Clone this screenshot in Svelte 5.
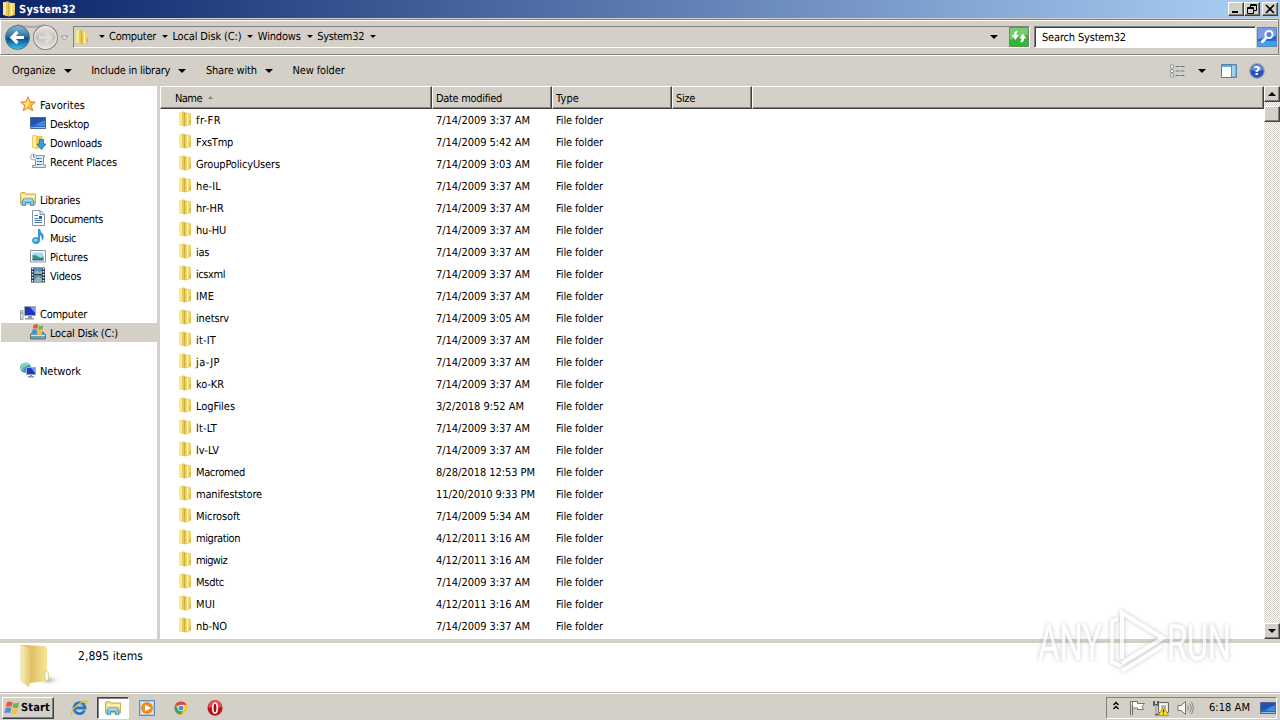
<script>
  const tree = [
    { t: 'Favorites', i: 'star', w: 45 },
    { t: 'Desktop', i: 'desktop', sub: true, w: 39 },
    { t: 'Downloads', i: 'downloads', sub: true, w: 52 },
    { t: 'Recent Places', i: 'recent', sub: true, w: 67 },
    null,
    { t: 'Libraries', i: 'library', w: 40 },
    { t: 'Documents', i: 'doc', sub: true, w: 53 },
    { t: 'Music', i: 'music', sub: true, w: 26 },
    { t: 'Pictures', i: 'picture', sub: true, w: 38 },
    { t: 'Videos', i: 'video', sub: true, w: 31 },
    null,
    { t: 'Computer', i: 'computer', w: 47 },
    { t: 'Local Disk (C:)', i: 'disk', sub: true, sel: true, w: 68 },
    null,
    { t: 'Network', i: 'network', w: 41 }
  ];
  const A = '7/14/2009 3:37 AM';
  const M = '4/12/2011 3:16 AM';
  const files = [
    ['fr-FR', A, 25], ['FxsTmp', '7/14/2009 5:42 AM', 37], ['GroupPolicyUsers', '7/14/2009 3:03 AM', 84],
    ['he-IL', A, 25], ['hr-HR', A, 28], ['hu-HU', A, 30], ['ias', A, 13], ['icsxml', A, 29], ['IME', A, 18],
    ['inetsrv', '7/14/2009 3:05 AM', 33], ['it-IT', A, 20], ['ja-JP', A, 24], ['ko-KR', A, 28],
    ['LogFiles', '3/2/2018 9:52 AM', 39], ['lt-LT', A, 21], ['lv-LV', A, 23],
    ['Macromed', '8/28/2018 12:53 PM', 49], ['manifeststore', '11/20/2010 9:33 PM', 66],
    ['Microsoft', '7/14/2009 5:34 AM', 44], ['migration', M, 44], ['migwiz', M, 31], ['Msdtc', A, 28],
    ['MUI', M, 19], ['nb-NO', A, 31]
  ];
  const crumbs = [['Computer', 47], ['Local Disk (C:)', 69], ['Windows', 43], ['System32', 47]];
  const dateWidth = (d) => (d.length > 17 ? 99 : d.length < 17 ? 88 : 94);

  function fit(node, width) {
    const run = () => {
      node.style.letterSpacing = '0px';
      const natural = node.getBoundingClientRect().width;
      node.style.letterSpacing = `${(width - natural) / node.textContent.length}px`;
    };
    run();
    document.fonts?.ready.then(run);
  }
</script>

{#snippet label(t, w)}<span class="label" use:fit={w}>{t}</span>{/snippet}

{#snippet arrow(w = 8)}
  <svg class="arrow" width={w} height={w / 2} viewBox="0 0 8 4"><path d="M0 0H8L4 4Z" /></svg>
{/snippet}

{#snippet folder()}
  <svg width="16" height="16" viewBox="0 0 16 16">
    <path d="M2 1.500 7 .3 8.500 1.500 14 2.200V14L8 15.500 2 14Z" fill="#e9cf62" />
    <path d="M2 1.500 6 1V14.500L2 13.500Z" fill="#f8e992" />
    <path d="M5 1.500 7.500 1V14L5 14.500Z" fill="#e9c95a" />
    <path d="M7 1 8.500 2V15L7 14.500Z" fill="#cfae42" />
    <path d="M8.500 2.500 14 2.500V13.500L8.500 15Z" fill="#eed36b" />
    <path d="M10.500 2.500V14" stroke="#fff3ac" stroke-width="1.500" />
    <path d="M13.300 9V13.500" stroke="#c5aa55" />
  </svg>
{/snippet}

{#snippet library()}
  <svg width="16" height="16" viewBox="0 0 16 16">
    <path d="M.5 2.500 1.500 1.500H5L6.500 3H15.500V13H.5Z" fill="#f3dc83" stroke="#d7ac3e" />
    <path d="M6 4.500H15V6H2V4Z" fill="#fff8ce" />
    <path d="M1.500 6.500H15V12H1.500Z" fill="#eedb87" />
    <path d="M2 14.500V10L4 8H12L14 10V14.500H10.500V11.500H5.500V14.500Z" fill="#79c6ea" stroke="#318bb9" stroke-width=".8" />
    <path d="M4 9H12" stroke="#c8f4ff" />
  </svg>
{/snippet}

{#snippet monitor()}
  <svg width="16" height="16" viewBox="0 0 16 16">
    <path d="M.5 2.500H15.500V13.500H.5Z" fill="#2a68c8" stroke="#4a6694" />
    <path d="M1 3H15V6Q7 7 1 11Z" fill="#2450ae" />
    <path d="M6 11Q9 6.500 15 5.500V11Z" fill="#4486dc" />
    <path d="M1 12.500H15" stroke="#8fc3ea" /><path d="M1 12.500H4" stroke="#7fc0a4" />
  </svg>
{/snippet}

{#snippet flag()}
  <g>
    <path d="M2 2Q5 0 8 2L7 7Q4 5.500 1 7Z" fill="#e95830" />
    <path d="M9 2.500Q12 4 15 2L14 7.500Q11 9 8 7.500Z" fill="#72b743" />
    <path d="M.8 8Q4 6.500 6.800 8.300L5.500 13.500Q3 12-.5 13.500Z" fill="#4b8edb" />
    <path d="M7.800 8.700Q11 10 13.800 8.500L12.500 14Q9 15.500 6.500 14Z" fill="#f6c433" />
  </g>
{/snippet}

{#snippet icon(n)}
  {#if n === 'library'}{@render library()}
  {:else if n === 'desktop'}{@render monitor()}
  {:else}
    <svg width="16" height="16" viewBox="0 0 16 16">
      {#if n === 'star'}
        <path d="M8 .8 10.100 5.700 15.400 6.100 11.300 9.500 12.700 14.800 8 11.900 3.300 14.800 4.700 9.500.6 6.100 5.900 5.700Z" fill="#ffbd36" stroke="#e6892b" />
        <path d="M8 3 9.200 7 8 10 4.500 13 6 9 3 7 7 6.500Z" fill="#ffe993" />
      {:else if n === 'downloads'}
        <path d="M2 1.500 6 .5 7 2H12.500V14L6 15 2 13.500Z" fill="#e9c957" /><path d="M3 2 6 1.500V14L3 13Z" fill="#fff0a7" />
        <path d="M9.500 5.500H13.500V10H16L11.500 15.500 7 10H9.500Z" fill="#369dde" stroke="#286aa7" stroke-width=".8" />
      {:else if n === 'recent'}
        <path d="M5.500 2.500H14.500V4H13.500V12H15.500V14.500H2.500V12.500H5.500Z" fill="#dceaf4" stroke="#8195a8" />
        <path d="M7 5.500H12M7 8.500H12M7 11.500H12" stroke="#5794c7" /><path d="M7 5.500H9M10 8.500H12M7 11.500H9" stroke="#334e70" />
        <circle cx="3.500" cy="4" r="3" fill="#f1f5fb" stroke="#9ba9b9" /><path d="M3.500 2V4H5" fill="none" stroke="#687789" />
      {:else if n === 'doc'}
        <path d="M2.500.5H10L14.500 4V15.500H2.500Z" fill="#fafcff" stroke="#8296ae" /><path d="M10 1V4.500H14" fill="#d6e5f2" stroke="#8296ae" />
        <path d="M4.500 5.500H8M4.500 8.500H8M4.500 10.500H12M4.500 12.500H12" stroke="#4879a8" /><path d="M9 6H12V9H9Z" fill="#315f9b" />
      {:else if n === 'music'}
        <path d="M8 0H10Q10.500 3 12.500 4.500 15.500 8 11.500 12.500 12.500 8 10 6V11.500A4 3.500 0 1 1 8 8.500Z" fill="#3699dc" /><ellipse cx="5.500" cy="11" rx="2" ry="1.500" fill="#8ad5f7" />
      {:else if n === 'picture'}
        <path d="M.5 2.500H15.500V14H.5Z" fill="#fff" stroke="#8496a8" /><path d="M2.500 4.500H13.500V12H2.500Z" fill="#9fddf2" /><path d="M2.500 7Q7 7 9 9T13.500 8V12H2.500Z" fill="#438c83" /><path d="M2.500 11H13.500V12.500H2.500Z" fill="#236aa3" />
      {:else if n === 'video'}
        <path d="M1 .5H15V15.500H1Z" fill="#24384c" /><path d="M4 1H12V7H4ZM4 8H12V15H4Z" fill="#548fbb" /><path d="M4 6 7 3 9 5 12 4V7H4ZM4 14 8 9 12 12V15H4Z" fill="#9bb3a0" />
        <path d="M2.500 1V15M13.500 1V15" stroke="#f1f5f7" stroke-width="1.500" stroke-dasharray="1.500 1.500" />
      {:else if n === 'computer'}
        <path d="M.5 5.500H3V14.500H.5Z" fill="#e4e9e8" stroke="#8f9b9b" /><path d="M1 8H3" stroke="#64af4b" />
        <path d="M4.500 1.500H15.500V10.500H4.500Z" fill="#2632b7" stroke="#a0abbf" /><path d="M10 2H15V8Z" fill="#7b96ea" /><path d="M8 11H12V13H14V14.500H5V13H8Z" fill="#8d99ac" />
      {:else if n === 'disk'}
        <path d="M.5 10.500 3 8H13L15.500 10.500V15H.5Z" fill="#6f9cae" stroke="#527581" /><path d="M1 11.500H15" stroke="#cdebf0" /><path d="M12 13.500H14" stroke="#62dd6c" />
        <g transform="translate(2 -.5) scale(.76)">{@render flag()}</g>
      {:else if n === 'network'}
        <circle cx="5.500" cy="5.500" r="5.300" fill="#359bbc" /><path d="M1 3 5 .5 9 2 7 4 3 6 4 9 1 7Z" fill="#83d4a1" /><path d="M2 2Q6-1 9 3" fill="none" stroke="#c8f7ff" />
        <path d="M6.500 5.500H15.500V12.500H6.500Z" fill="#2438bf" stroke="#9badcb" /><path d="M11 6H15V11Z" fill="#6c99e8" /><path d="M10 13H12V14H14V15.500H8V14H10Z" fill="#8692a3" />
      {/if}
    </svg>
  {/if}
{/snippet}

<div class="screen">
  <header class="title">
    <span class="title-icon">{@render folder()}</span><b>{@render label('System32', 57)}</b>
    <div class="winbtns">
      <i><svg width="12" height="10"><path d="M2 8H8" stroke="#000" stroke-width="2" /></svg></i>
      <i><svg width="12" height="10"><path d="M4.500 4V.5H10.500V6.500H8M4 1.500H11M1.500 3.500H7.500V9.500H1.500ZM1 4.500H8" fill="none" stroke="#000" /></svg></i>
      <i class="close"><svg width="12" height="10"><path d="M2 1 10 9M10 1 2 9" stroke="#000" stroke-width="1.600" /></svg></i>
    </div>
  </header>

  <div class="nav">
    <svg class="navbtns" width="72" height="30" viewBox="0 0 72 30">
      <defs>
        <linearGradient id="blue" x2="0" y2="1"><stop offset="0" stop-color="#8fb7cc" /><stop offset=".45" stop-color="#2a76a9" /><stop offset=".55" stop-color="#07508b" /><stop offset="1" stop-color="#38c8f4" /></linearGradient>
        <linearGradient id="grey" x2="0" y2="1"><stop offset="0" stop-color="#e8e6e3" /><stop offset=".5" stop-color="#c4c1bd" /><stop offset="1" stop-color="#e6e4e1" /></linearGradient>
      </defs>
      <path d="M17 3Q31 7 45 3" fill="none" stroke="#aaa9a8" stroke-width="2" />
      <circle cx="17.500" cy="15.500" r="12" fill="url(#blue)" stroke="#536f86" />
      <circle cx="45.500" cy="15.500" r="12" fill="url(#grey)" stroke="#8f8e8c" stroke-width="1.200" /><circle cx="45.500" cy="15.500" r="10.800" fill="none" stroke="#f1efed" />
      <path d="M24 15.500H13M17.500 10 12 15.500 17.500 21" fill="none" stroke="#fff" stroke-width="3.200" />
      <path d="M39 15.500H50M45.500 10 51 15.500 45.500 21" fill="none" stroke="#dedbd8" stroke-width="3" />
      <path d="M61 14H68L64.500 18Z" fill="#eee" stroke="#969490" />
    </svg>
    <div class="address">
      <span class="fold">{@render folder()}</span>
      <span class="first">{@render arrow(6)}</span>
      {#each crumbs as c}<span class="crumb">{@render label(c[0], c[1])}{@render arrow(6)}</span>{/each}
      <span class="drop">{@render arrow(8)}</span>
      <svg class="refresh" width="20" height="20" viewBox="0 0 20 20">
        <path d="M.5.5H19.500V19.500H.5Z" fill="#42aa42" stroke="#668a61" /><path d="M1 1H19V8Q10 9 1 13Z" fill="#77cb71" /><path d="M1 15H19V19H1Z" fill="#28bf26" />
        <path d="M9 4Q5 3.500 5 8H2.500L6.500 13 9.500 8H7.500Q7 6 9 4ZM11 15Q15 16 15 11.500H17.500L13.500 6.500 10.500 11.500H12.500Q13 13 11 15Z" fill="#fff" />
      </svg>
    </div>
    <div class="search">{@render label('Search System32', 84)}</div>
    <svg class="go" width="20" height="20" viewBox="0 0 20 20">
      <path d="M.5.5H19.500V19.500H.5Z" fill="#2865d1" stroke="#6582b3" /><path d="M1 1H19V9L1 12Z" fill="#799be7" /><path d="M1 14H19V19H1Z" fill="#36a4ec" />
      <circle cx="12" cy="7.500" r="3.600" fill="#5482dc" stroke="#fff" stroke-width="2" /><path d="M9 11 4.500 15.500" stroke="#fff" stroke-width="2.800" />
    </svg>
  </div>

  <div class="tools">
    <span>{@render label('Organize', 43.5)}{@render arrow()}</span>
    <span>{@render label('Include in library', 79)}{@render arrow()}</span>
    <span>{@render label('Share with', 51)}{@render arrow()}</span>
    <span>{@render label('New folder', 52)}</span>
    <div class="right">
      <svg width="16" height="14" viewBox="0 0 16 14"><g fill="#fff" stroke="#8b97a3"><path d="M.5 1H3.500V4H.5ZM.5 5.500H3.500V8.500H.5ZM.5 10H3.500V13H.5Z" /><path d="M5.500 2.500H15M5.500 7H15M5.500 11.500H15" stroke="#68747f" stroke-dasharray="4 1" /></g></svg>
      <span class="vd">{@render arrow()}</span>
      <svg class="pane" width="16" height="14" viewBox="0 0 16 14"><path d="M.5.5H15.500V13.500H.5Z" fill="#fff" stroke="#5180a5" /><path d="M1 2H10" stroke="#62aeda" stroke-width="2" /><path d="M10.500 1H15V13H10.500Z" fill="#a2d4ee" stroke="#5693bb" /></svg>
      <svg width="16" height="16" viewBox="0 0 16 16"><circle cx="8" cy="8" r="7.300" fill="#2b50b6" stroke="#9aa4ba" stroke-width="1.200" /><path d="M2 7A6 5.500 0 0 1 14 7Q8 9 2 7" fill="#6989d5" /><text x="8" y="12.300" text-anchor="middle" class="q">?</text></svg>
    </div>
  </div>

  <main>
    <aside>
      {#each tree as n}
        <div class="node" class:sub={n?.sub} class:sel={n?.sel}>
          {#if n}<span class="ni">{@render icon(n.i)}</span>{@render label(n.t, n.w)}{/if}
        </div>
      {/each}
    </aside>
    <section class="list">
      <div class="head">
        <div class="c1">{@render label('Name', 27)}<svg width="5" height="3"><path d="M0 3H5L2.500 0Z" fill="#888681" /></svg></div>
        <div>{@render label('Date modified', 66)}</div><div>{@render label('Type', 23)}</div><div class="c4">{@render label('Size', 19)}</div><div class="rest"></div>
      </div>
      {#each files as f}
        <div class="row">
          <span class="cell name">{@render folder()}{@render label(f[0], f[2])}</span>
          <span class="cell date">{@render label(f[1], dateWidth(f[1]))}</span>
          <span class="cell">{@render label('File folder', 47)}</span>
        </div>
      {/each}
    </section>
    <div class="scroll">
      <i class="sb"><svg width="8" height="4" viewBox="0 0 8 4"><path d="M0 4H8L4 0Z" /></svg></i>
      <i class="sb thumb"></i>
      <i class="sb down">{@render arrow()}</i>
    </div>
  </main>

  <div class="details">
    <svg width="42" height="46" viewBox="0 0 42 46">
      <defs>
        <linearGradient id="f1"><stop offset="0" stop-color="#faf0ba" /><stop offset="1" stop-color="#e3c36a" /></linearGradient>
        <linearGradient id="f2"><stop offset=".3" stop-color="#dfbd5c" /><stop offset="1" stop-color="#f8e697" /></linearGradient>
        <radialGradient id="sh"><stop stop-color="#888" stop-opacity=".7" /><stop offset="1" stop-color="#fff" stop-opacity="0" /></radialGradient>
      </defs>
      <ellipse cx="28" cy="36" rx="13" ry="6" fill="url(#sh)" />
      <path d="M3 1 24 2 27 4V37L10 39Z" fill="url(#f2)" />
      <path d="M1 1 9 3.500Q11 5 10.500 10V37L8.500 42.500 1 37Z" fill="url(#f1)" stroke="#e2c96f" stroke-width=".6" />
      <path d="M25 27Q24 34 26 37L28.500 36V29Q27 26 25 27Z" fill="#f9fbf5" stroke="#d1b961" stroke-width=".6" />
    </svg>
    {@render label('2,895 items', 65)}
  </div>

  <footer>
    <div class="start"><svg width="16" height="16" viewBox="-1 0 17 16">{@render flag()}</svg><b>{@render label('Start', 29)}</b></div>
    <div class="task ie">
      <svg width="17" height="16" viewBox="0 0 17 16"><path d="M13.500 10.500A5.500 5.500 0 1 1 14 8H4" fill="none" stroke="#2477c7" stroke-width="2.800" /><path d="M5 7Q8 3 12 6" fill="none" stroke="#6dc3f0" /><path d="M1 15Q-1 11 6 5.500T15.500 1Q17 2 14 5" fill="none" stroke="#e6bd36" stroke-width="1.400" /></svg>
    </div>
    <div class="task active">{@render library()}</div>
    <div class="task">
      <svg width="16" height="16" viewBox="0 0 16 16"><path d="M.5.5H15.500V15.500H.5Z" fill="#a9cee8" stroke="#548dbf" /><path d="M2 2H14V14H2Z" fill="#e3eff7" /><circle cx="8" cy="8" r="6" fill="#f18a19" /><path d="M6 4.500 12 8 6 11.500Z" fill="#fff" /></svg>
    </div>
    <div class="task">
      <svg width="14" height="14" viewBox="0 0 16 16"><circle cx="8" cy="8" r="7.500" fill="#f5c933" /><path d="M8 8 1.500 4.200A7.500 7.500 0 0 1 14.500 4.300H8Z" fill="#de463a" /><path d="M1.500 4.200A7.500 7.500 0 0 0 8 15.500L11.200 9.800 8 8 4.800 9.800Z" fill="#3fa554" /><circle cx="8" cy="8" r="3.700" fill="#fff" /><circle cx="8" cy="8" r="2.900" fill="#478bea" /></svg>
    </div>
    <div class="task">
      <svg width="16" height="16" viewBox="0 0 16 16"><ellipse cx="8" cy="8" rx="7.500" ry="7.700" fill="#ba171c" /><path d="M1 7A7 7 0 0 1 15 7Q8 9 1 7" fill="#de5351" /><ellipse cx="8" cy="8" rx="2.200" ry="5" fill="#a60b12" stroke="#fff" stroke-width="1.600" /></svg>
    </div>
    <div class="tray">
      <svg class="chev" width="6" height="9" viewBox="0 0 6 9"><path d="M.5 4 3 1.500 5.500 4M.5 8 3 5.500 5.500 8" fill="none" stroke="#000" stroke-width="1.400" /></svg>
      <svg class="t1" width="16" height="16" viewBox="0 0 16 16"><path d="M1.500 1V15.500M3.500 1V15M1.500 1.500H8.500V3.500H15.500L13 6.500 14.500 9.500H8.500V8H3.500" fill="#fff" stroke="#77736f" stroke-width="1" /></svg>
      <svg class="t2" width="16" height="16" viewBox="0 0 16 16"><path d="M5.500 2.500H15.500V12.500H5.500Z" fill="#e8e8e6" stroke="#686766" /><path d="M7.500 4.500H13.500V10.500H7.500Z" fill="#b7bbc0" stroke="#fff" /><path d="M1 1V5H5V1M3 5V14.500H7" fill="none" stroke="#5f5e5d" stroke-width="2" /><path d="M3 5V14" stroke="#fff" /><path d="M10.500 6.500 15.500 15.500H5.500Z" fill="#ffdf20" stroke="#c69a15" /><path d="M10.500 9.500V12.500M10.500 13.500V14.500" stroke="#403711" stroke-width="1.300" /></svg>
      <svg class="t3" width="17" height="16" viewBox="0 0 17 16"><path d="M1 5.500H4L8.500 1.500V14.500L4 10.500H1Z" fill="#f8f8f7" stroke="#777471" /><path d="M10.500 5.500Q12.500 8 10.500 10.500M12.500 3.500Q16 8 12.500 12.500M14.500 2Q18 8 14.500 14" fill="none" stroke="#888580" /></svg>
      <span class="clock">{@render label('6:18 AM', 41)}</span>
      {@render monitor()}
    </div>
  </footer>

  <svg class="mark" width="212" height="80" viewBox="0 0 212 80">
    <defs><filter id="soft" x="-10%" y="-10%" width="120%" height="120%"><feDropShadow dx="0" dy="0" stdDeviation="2" flood-color="#77736f" flood-opacity=".6" /></filter></defs>
    <g filter="url(#soft)" opacity=".72">
      <text transform="translate(8 58) scale(.66 1)" textLength="97" lengthAdjust="spacing">ANY</text>
      <text transform="translate(137 58) scale(.66 1)" textLength="97" lengthAdjust="spacing">RUN</text>
      <path d="M92 57V11L133 36 92 61" fill="none" stroke="#fff" stroke-width="4" />
      <path d="M88 17 82 19V60L91 64M92 69 132 44" fill="none" stroke="#fff" stroke-width="3.500" />
    </g>
  </svg>
</div>

<style>
  :global(body) { margin: 0; overflow: hidden; }
  .screen { position: relative; width: 1280px; height: 720px; background: #d4d0c8; overflow: hidden; display: flex; flex-direction: column; font: 11px/14px "DejaVu Sans Condensed", "DejaVu Sans", sans-serif; font-stretch: semi-condensed; text-rendering: geometricPrecision; color: #000; }
  .screen * { box-sizing: border-box; }
  svg { display: block; flex: none; }
  i { font-style: normal; }
  .label { white-space: pre; flex: none; }
  .title { height: 18px; flex: none; display: flex; align-items: center; background: linear-gradient(90deg, #0a246a, #a6caf0 96%); color: #fff; padding-right: 2px; }
  .title-icon { margin: 0 2px 0 1px; }
  .title b { margin-top: 2px; }
  .winbtns { margin-left: auto; display: flex; }
  .winbtns i, .sb { background: #d4d0c8; border: 1px solid; border-color: #fff #404040 #404040 #fff; box-shadow: inset -1px -1px #808080; display: grid; place-items: center; }
  .winbtns i { width: 16px; height: 14px; }
  .winbtns .close { margin-left: 2px; }
  .nav { height: 36px; flex: none; display: flex; align-items: center; border: 1px solid; border-color: #808080 #808080 #808080 #fff; box-shadow: inset 0 1px #fff, 0 1px #fff; margin: 1px 0 0; padding-bottom: 1px; width: 1279px; }
  .navbtns { margin-left: -1px; }
  .address { height: 22px; width: 957px; margin-left: 1px; border: 1px solid; border-color: #808080 #fff #fff #808080; display: flex; align-items: center; }
  .first { margin-left: 9px; margin-right: 4px; }
  .crumb { display: flex; align-items: center; gap: 6px; margin-right: 4.4px; }
  .drop { margin-left: auto; margin-right: 11px; }
  .search { width: 222px; height: 22px; margin-left: 4px; background: #fff; border: 1px solid; border-color: #808080 #fff #fff #808080; box-shadow: inset 1px 1px #404040; padding: 4px 7px 0; }
  .go { margin-left: 1px; }
  .tools { height: 31px; flex: none; display: flex; align-items: center; padding: 0 15px 0 12px; }
  .tools > span { display: flex; align-items: center; gap: 8px; margin-right: 19.700px; }
  .right { margin-left: auto; display: flex; align-items: center; }
  .vd { margin-left: 12px; margin-right: 15px; }
  .pane { margin-right: 12px; }
  .q { font: bold 12px "DejaVu Sans", sans-serif; fill: #fff; }
  main { height: 553px; flex: none; display: flex; }
  aside { width: 160px; flex: none; background: #fff; border-right: 3px solid #d4d0c8; padding-top: 9px; }
  .node { height: 19px; display: flex; align-items: center; padding: 2px 0 0 20px; }
  .sub { padding-left: 30px; }
  .sel { background: #d4d0c8; margin-left: 1px; padding-left: 29px; }
  .ni { width: 20px; margin-top: -4px; flex: none; }
  .list { width: 1104px; background: #fff; }
  .head { height: 23px; display: flex; background: #d4d0c8; }
  .head > div { width: 120px; border: 1px solid; border-color: #fff #404040 #404040 #fff; box-shadow: inset -1px -1px #808080; padding: 5px 3px 0; display: flex; }
  .head .c1 { width: 272px; padding-left: 14px; }
  .c1 svg { margin: 4px 0 0 6px; }
  .head .c4 { width: 80px; }
  .head .rest { flex: 1; width: auto; }
  .row { height: 22px; display: flex; align-items: center; padding: 2px 0 0 17px; }
  .cell { display: flex; align-items: center; }
  .cell.name { width: 259px; gap: 3px; }
  .cell.date { width: 120px; }
  .name svg { margin-top: -4px; }
  .scroll { width: 16px; display: flex; flex-direction: column; background: repeating-conic-gradient(#fff 0 25%, #d4d0c8 0 50%) 0 0 / 2px 2px; }
  .sb { width: 16px; height: 16px; }
  .thumb { margin-top: 4px; }
  .down { margin-top: auto; }
  .details { height: 53px; flex: none; background: #fff; border-top: 4px solid #d4d0c8; display: flex; padding: 1px 0 0 20px; }
  .details .label { margin: 5px 0 0 16px; font-size: 12px; }
  footer { height: 28px; flex: none; display: flex; align-items: center; background: #d4d0c8; border-top: 1px solid #bebbb4; box-shadow: inset 0 1px #fff; padding: 2px 3px 0 2px; }
  .start { width: 52px; height: 22px; border: 1px solid; border-color: #fff #404040 #404040 #fff; box-shadow: inset -1px -1px #808080; display: flex; align-items: center; padding-left: 1px; gap: 1px; margin-right: 9px; }
  .task { width: 32px; height: 22px; margin-right: 2px; display: grid; place-items: center; }
  .active { background: #fff; border: 1px solid; border-color: #404040 #fff #fff #404040; box-shadow: inset 1px 1px #808080; }
  .tray { width: 171px; height: 22px; margin-left: auto; border: 1px solid; border-color: #808080 #fff #fff #808080; display: flex; align-items: center; }
  .chev { margin: -4px 10px 0 6px; }
  .t1 { margin-right: 8px; } .t2 { margin-right: 8px; } .t3 { margin-right: 15px; }
  .clock { margin-right: 10px; }
  .mark { position: absolute; left: 1030px; top: 602px; }
  .mark text { font: 50px Roboto, sans-serif; fill: #fff; }
</style>
